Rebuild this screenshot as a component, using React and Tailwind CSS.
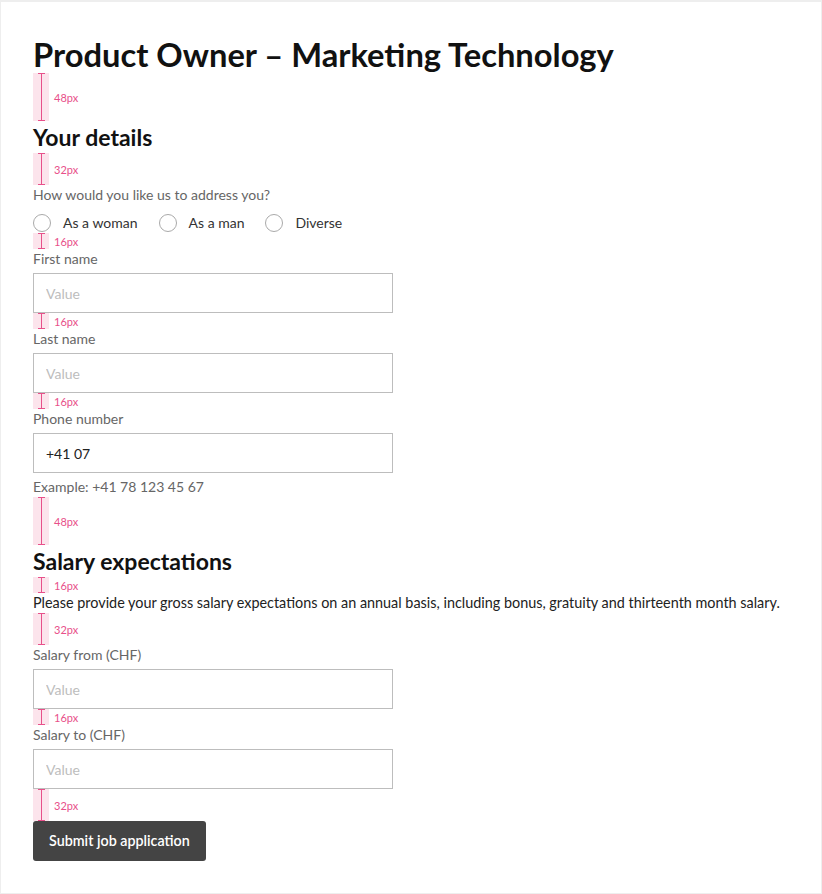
import React, {useState} from 'react';

// pink spacing marker, as drawn by the design handoff
function Spacer(props) {
    return (
        <div className="flex" style={{height: props.size}}>
            <div className="w-4 bg-[#fce4ec] flex flex-col items-center">
                <div className="h-px w-[7px] bg-[#e8508a]"></div>
                <div className="flex-1 w-px bg-[#e8508a]"></div>
                <div className="h-px w-[7px] bg-[#e8508a]"></div>
            </div>
            <div className="ml-[5px] self-center text-[11px] leading-none text-[#e8508a]">{props.size}px</div>
        </div>
    )
}

function Field(props) {
    return (
        <div className="flex flex-col">
            <label className="text-sm leading-5 text-[#666666]">{props.label}</label>
            <input
                className="mt-1 h-10 w-[360px] border border-[#bdbdbd] px-3 text-sm text-[#222222] placeholder:text-[#bdbdbd] outline-none"
                placeholder="Value"
                defaultValue={props.value}/>
        </div>
    )
}

function Radio(props) {
    return (
        <label className="flex items-center gap-3 cursor-pointer" onClick={props.onClick}>
            <span className={"h-[18px] w-[18px] rounded-full border flex items-center justify-center " + (props.checked ? "border-[#444444]" : "border-[#aaaaaa]")}>
                {props.checked && <span className="h-[8px] w-[8px] rounded-full bg-[#444444]"></span>}
            </span>
            <span className="text-sm text-[#333333]">{props.label}</span>
        </label>
    )
}

export default function App() {

    const [salutation, set_salutation] = useState();
    const options = ["As a woman", "As a man", "Diverse"];

    return (
        <div className="h-[894px] w-[822px] border border-t-2 border-[#eeeeee] bg-white font-['Lato',sans-serif] overflow-hidden">
            <div className="pl-[32px] pt-[35px]">
                <h1 className="text-[32.7px] leading-9 font-bold text-[#111111]">Product Owner – Marketing Technology</h1>
                <Spacer size={48}/>
                <h2 className="text-[23px] leading-8 font-bold text-[#111111]">Your details</h2>
                <Spacer size={32}/>
                <div className="text-sm leading-5 text-[#666666]">How would you like us to address you?</div>
                <div className="mt-2 flex gap-[21px] h-5 items-center">
                    {options.map((o) => (
                        <Radio key={o} label={o} checked={salutation == o} onClick={() => set_salutation(o)}/>
                    ))}
                </div>
                <Spacer size={16}/>
                <Field label="First name"/>
                <Spacer size={16}/>
                <Field label="Last name"/>
                <Spacer size={16}/>
                <Field label="Phone number" value="+41 07"/>
                <div className="mt-1 text-sm leading-5 text-[#666666]">Example: +41 78 123 45 67</div>
                <Spacer size={48}/>
                <h2 className="text-[23px] leading-8 font-bold text-[#111111]">Salary expectations</h2>
                <Spacer size={16}/>
                <p className="text-[14.4px] leading-5 text-[#222222] whitespace-nowrap">Please provide your gross salary expectations on an annual basis, including bonus, gratuity and thirteenth month salary.</p>
                <Spacer size={32}/>
                <Field label="Salary from (CHF)"/>
                <Spacer size={16}/>
                <Field label="Salary to (CHF)"/>
                <Spacer size={32}/>
                <button className="h-10 rounded-[3px] bg-[#444444] px-4 text-[14.3px] font-semibold text-white">Submit job application</button>
            </div>
        </div>
    )
}
